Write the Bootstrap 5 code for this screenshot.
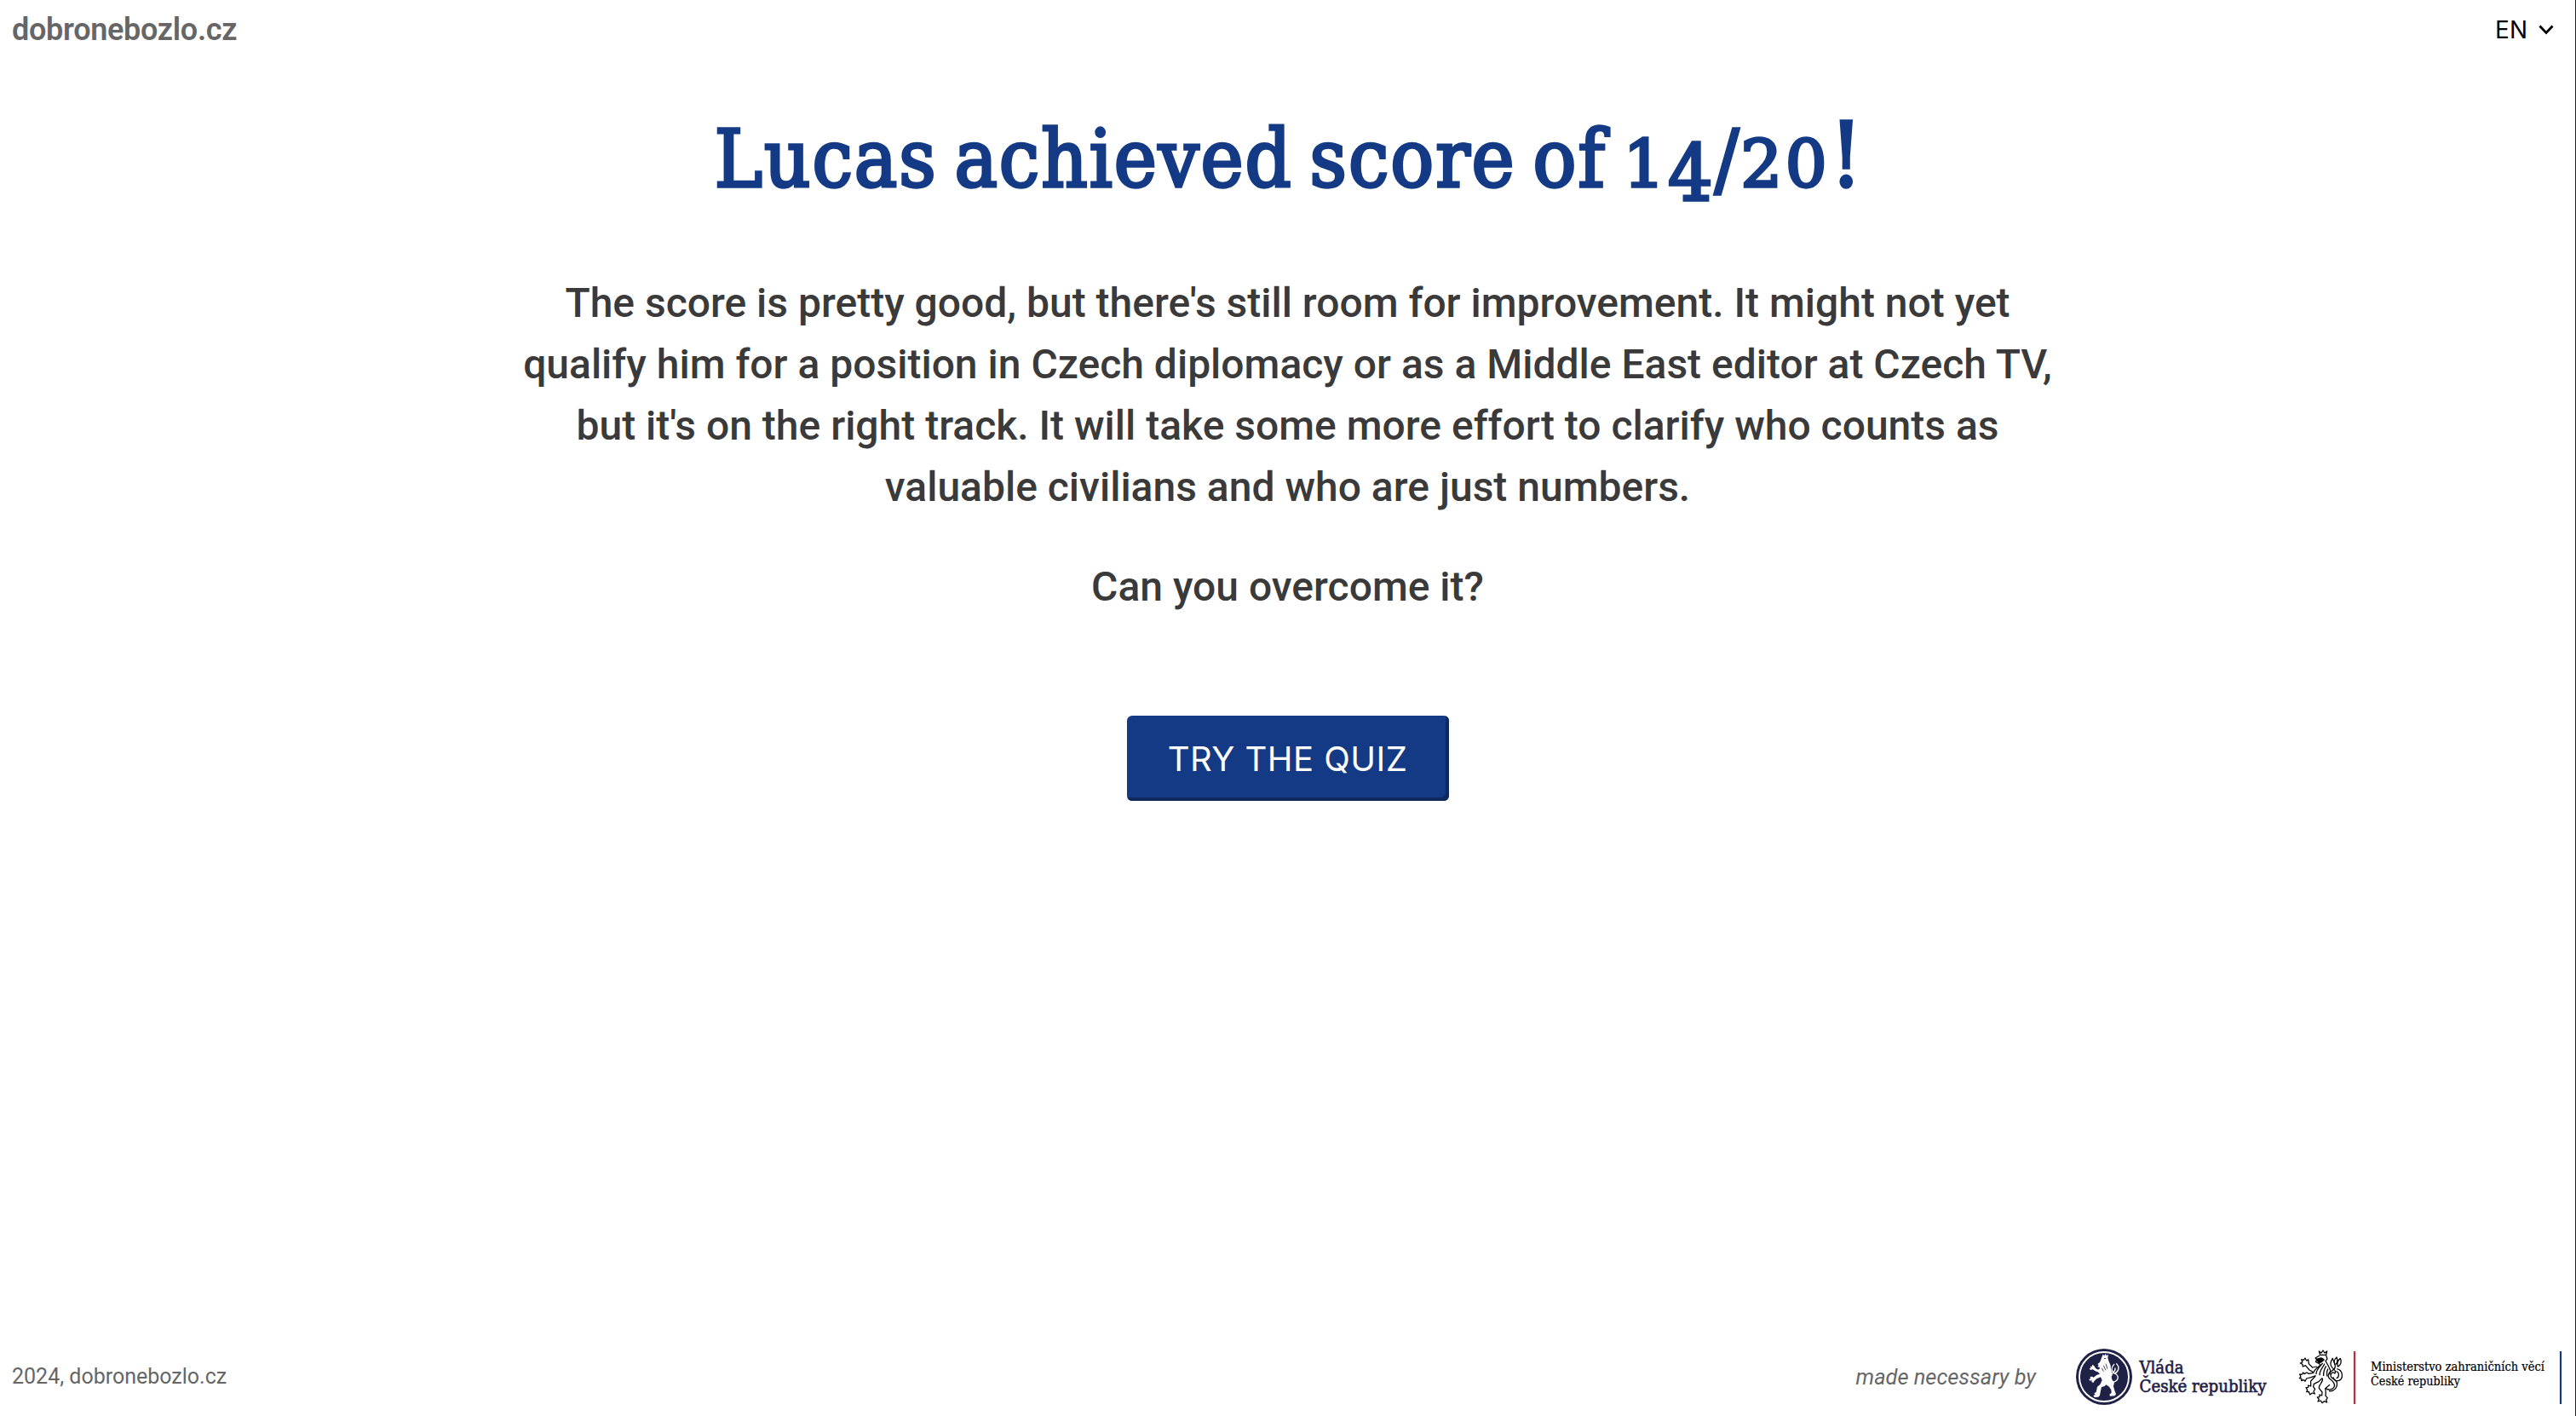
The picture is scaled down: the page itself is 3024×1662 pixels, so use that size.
<!DOCTYPE html>
<html lang="en">
<head>
<meta charset="utf-8">
<meta name="viewport" content="width=device-width, initial-scale=1">
<title>dobronebozlo.cz</title>
<link href="https://cdn.jsdelivr.net/npm/bootstrap@5.3.0/dist/css/bootstrap.min.css" rel="stylesheet">
<style>
body{font-family:Roboto,"Liberation Sans",sans-serif;color:#3a3a3a;background:#fff;height:1662px;overflow:hidden;border-right:1px solid #222}
.site-head{height:70px;padding:0 25px 0 14px}
.site-name{font-size:36px;font-weight:600;line-height:68px;color:#666;white-space:nowrap;letter-spacing:-.3px}
.lang-pick{font:400 28px/70px Inter,sans-serif;color:#000;gap:13px}
.score-title{font-family:"DejaVu Serif Condensed","DejaVu Serif",serif;font-stretch:condensed;font-weight:400;font-size:94px;line-height:120px;height:120px;color:#143a85;margin:57px 0 0;padding-left:4px;white-space:nowrap;letter-spacing:2px;word-spacing:-9px;-webkit-text-stroke:3.4px #143a85}
.num-x,.num-d,.num-e{line-height:0}
.num-x{font-family:"DejaVu Serif",serif;font-stretch:normal;font-size:77px;letter-spacing:3.5px}
.num-d{font-size:92px;position:relative;top:16px}
.num-e{font-size:105px}
.verdict{font-size:48px;line-height:72px;font-weight:500;white-space:nowrap;margin-top:73px}
.verdict p{margin:0 0 45px}
.btn-quiz{--bs-btn-color:#fff;--bs-btn-bg:#143a85;--bs-btn-hover-color:#fff;--bs-btn-hover-bg:#10295d;font:400 40px/101px Inter,sans-serif;letter-spacing:.45px;width:378px;height:100px;padding:0;border:0;border-radius:6px;box-shadow:inset -4px -4px 0 #10295d;margin-top:70px}
.site-foot{height:92px;padding:0 15px 0 14px;font-size:25px;line-height:94px;color:#666;white-space:nowrap}
.made-by{font-size:25.4px;margin-right:45px}
.logo-gov{margin-right:33px}
.logo-gov,.logo-mzv{display:block;overflow:visible}
</style>
<script src="https://cdn.jsdelivr.net/npm/bootstrap@5.3.0/dist/js/bootstrap.bundle.min.js"></script>
</head>
<body class="d-flex flex-column">
<header class="site-head d-flex justify-content-between align-items-center">
<span class="site-name">dobronebozlo.cz</span>
<div class="lang-pick d-flex align-items-center"><span>EN</span><svg width="18" height="12" viewBox="0 0 18 12" fill="none" stroke="#000" stroke-width="2.8"><path d="M1.500 1.500 9 9.500 16.500 1.500"/></svg></div>
</header>
<main class="flex-grow-1 d-flex flex-column align-items-center text-center">
<h1 class="score-title">Lucas achieved score of <span class="num-x">1</span><span class="num-d">4</span>/<span class="num-x">20</span><span class="num-e">!</span></h1>
<div class="verdict"><p>The score is pretty good, but there's still room for improvement. It might not yet<br>qualify him for a position in Czech diplomacy or as a Middle East editor at Czech TV,<br>but it's on the right track. It will take some more effort to clarify who counts as<br>valuable civilians and who are just numbers.</p><p>Can you overcome it?</p></div>
<a class="btn btn-quiz" href="#">TRY THE QUIZ</a>
</main>
<footer class="site-foot d-flex justify-content-between align-items-center">
<span>2024, dobronebozlo.cz</span>
<div class="d-flex align-items-center">
<em class="made-by">made necessary by</em>
<!-- Government logo: lion in a roundel -->
<svg class="logo-gov" width="226" height="72" viewBox="-1 0 226 72">
<circle cx="34" cy="36" r="33" fill="#1f2147"/><circle cx="34" cy="36" r="29" fill="none" stroke="#fff" stroke-width="1.9"/>
<g transform="translate(-1 0) scale(.3333)" fill="#fff">
<path d="M101 29l5 5 4-7 4 7 6-5-2 13 4 12 6 14 1 14 4 12-2 14 2 10 8 10-3 14 4 14 5 13-4 6-17 1-2-6 7-5-1-11-7-11-10-7-8 6-9 2-3 13-3 16-5 6-14 1-4-6 7-3-4-5 7-4 4-19 10-8 7-15-5-11-14 6-8 7-4 7-6-3 1-6-7 2-3-5 6-4-3-5 8-1 5 3 12-9 10-3-7-7-9-3-9-6-8 2-4-5 6-2-3-6 7 1 0-7 7 4 5 9 9 5 6-4-1-5-7-1 4-6-4-4 8-6z"/>
<path d="M130 128C160 124 158 104 143 96S130 76 140 64M142 97C158 88 160 74 149 62M131 104C130 94 147 91 144 78" fill="none" stroke="#fff" stroke-width="4" stroke-linecap="round"/>
<path d="M105 44l7-1M111 62l6 18M103 68l8 17M97 77l6 12" stroke="#1f2147" stroke-width="2.500" fill="none"/>
</g>
<g font-family="'DejaVu Serif Condensed','DejaVu Serif',serif" font-stretch="condensed" font-size="20" fill="#1f2147" stroke="#1f2147" stroke-width=".6"><text x="75.500" y="31.500" textLength="52" lengthAdjust="spacingAndGlyphs">Vláda</text><text x="75.500" y="54" textLength="149" lengthAdjust="spacingAndGlyphs">České republiky</text></g>
</svg>
<!-- Ministry logo: outlined lion between two rules -->
<svg class="logo-mzv" width="314" height="72" viewBox="0 0 314 72">
<g transform="scale(.3333)" fill="none" stroke="#000" stroke-width="3.800" stroke-linejoin="round">
<path d="M89 31l-4-13 8 6 6-9 6 9 8-6-3 13zM87 33l-15 9 6 5-5 8 12 6 6 7M110 33l4 12-6 7 8 14 9 19-2 15M75 49l14-7 14 5"/>
<path d="M76 46l18-4 8 7-9 7-8 3z" fill="#000"/>
<path d="M89 67c-10 10-21 16-24 28M98 60c-11 14-24 23-23 39M105 62c-10 18-19 24-18 41M110 70c-9 15-10 22-9 35M117 80c-6 9-5 18-3 27"/>
<path d="M78 72l-16 3-13-13-2-15-6 4-5-9-5 7-8-2 4 9-8 4 8 4 1 8 9-4 14 16 14 8"/>
<path d="M66 94l-17 3-7-4-9 5-4-5-5 7-7-1 4 9-5 5 8 2-1 7 9-3 4 5 5-10 16-4 17-6"/>
<path d="M72 106l-16 17 0 18-9-3 0 7-8 1 5 8-3 7 8-1 4 11 8-6 9 3-4-9 5-7-6-9 2-10 17-8 13-13"/>
<path d="M97 114c4 13-13 19-12 34l11 14-1 12-8-3 0 8-8 1 6 7-4 8 10-3 5 8 7-6 10 4-3-9 5-7-7-7 1-13-2-13 16-13"/>
<path d="M109 149c18 11 38-3 27-21-7-13-22-12-18-27 5-18 23-12 24-29 1-9-7-20-9-29-7 10-10 19-4 29 8 12 19 14 12 24-7-7-14-3-15 8 0 11 17 9 22 24 3 17-10 33-28 30"/>
<path d="M143 65c9-8 7-19 4-26-9 9-10 20-6 26M151 73c14-9 13-21 9-30-10 8-12 19-9 30M148 80c23 5 24 38 4 42-9 2-17-5-17-13M145 89c12 2 12 22 1 24"/>
</g>
<path d="M70 6V68" stroke="#b5333f" stroke-width="2.200"/><path d="M312 6V68" stroke="#143a7d" stroke-width="2.200"/>
<g font-family="'DejaVu Serif',serif" font-size="14" fill="#000" stroke="#000" stroke-width=".2"><text x="89" y="29" textLength="204" lengthAdjust="spacingAndGlyphs">Ministerstvo zahraničních věcí</text><text x="89" y="46" textLength="105" lengthAdjust="spacingAndGlyphs">České republiky</text></g>
</svg>
</div>
</footer>
</body>
</html>
